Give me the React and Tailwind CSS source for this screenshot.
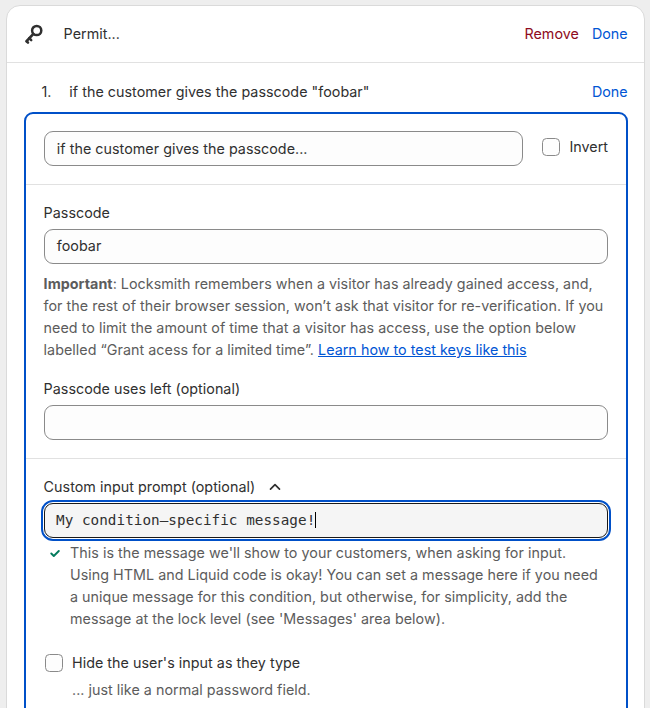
import React from 'react';

function TextField({ value = '', className = '' }) {
  return (
    <div className={`flex h-[35px] items-center rounded-[9px] border border-[#8a8a8a] bg-[#fdfdfd] px-[11.8px] ${className}`}>
      {value}
    </div>
  );
}

function Checkbox() {
  return <span className="block size-[18px] shrink-0 rounded-[4.5px] border border-[#8a8a8a] bg-[#fdfdfd]" />;
}

function KeyIcon() {
  return (
    <svg className="block h-[22px] w-[20px] overflow-visible" viewBox="0 0 20 22" fill="none" stroke="#303030">
      <circle cx="12.7" cy="7.5" r="4.6" strokeWidth="2.5" />
      <path d="M9.4 10.9 2.6 18.2" strokeWidth="2.7" strokeLinecap="round" />
      <path d="M5.3 15.2 7.2 17.1M2.7 18.3 4 19.7" strokeWidth="2.5" strokeLinecap="round" />
    </svg>
  );
}

export default function App() {
  return (
    <div className="h-[708px] w-[650px] overflow-hidden bg-[#eeeeee] pt-[5px] pl-[6px] font-['Inter',sans-serif] text-[14.3px] leading-[22px] tracking-[0.035px] whitespace-nowrap text-[#303030]">
      <div className="h-[760px] w-[639px] rounded-[14px] border border-[#dadada] bg-white">
        <header className="flex h-[57px] items-center border-b border-[#e1e1e1] pr-[16.3px] pl-[17px]">
          <KeyIcon />
          <span className="ml-[19.6px]">Permit...</span>
          <button className="ml-auto text-[#8e0b21]">Remove</button>
          <button className="ml-[13px] text-[#0055d4]">Done</button>
        </header>

        <div className="flex h-[49px] items-end pr-[16.3px] pb-[9px] pl-[34.5px]">
          <span className="w-[27.8px]">1.</span>
          <span>if the customer gives the passcode "foobar"</span>
          <button className="ml-auto text-[#0055d4]">Done</button>
        </div>

        <section className="mr-[16px] ml-[17px] h-[640px] rounded-[9px] border-2 border-[#0050c8]">
          <div className="flex h-[71px] border-b border-[#e1e1e1] pt-[17px] pl-[18px]">
            <TextField className="w-[479px]" value="if the customer gives the passcode..." />
            <label className="mt-[5px] ml-[19px] flex h-[22px] items-center gap-[9.4px]">
              <Checkbox />
              Invert
            </label>
          </div>

          <div className="h-[274px] border-b border-[#e1e1e1] px-[18px] pt-[17px]">
            <div className="-ml-[0.4px]">Passcode</div>
            <TextField className="mt-[5px] pb-px" value="foobar" />
            <p className="mt-[9px] -ml-[0.4px] text-[#5c5c5c]">
              <b className="font-bold">Important</b>: Locksmith remembers when a visitor has already gained access, and,
              <br />
              for the rest of their browser session, won’t ask that visitor for re-verification. If you
              <br />
              need to limit the amount of time that a visitor has access, use the option below
              <br />
              labelled “Grant acess for a limited time”.{' '}
              <a className="text-[#0055d4] underline">Learn how to test keys like this</a>
            </p>
            <div className="mt-[17px] -ml-[0.4px]">Passcode uses left (optional)</div>
            <TextField className="mt-[5px]" />
          </div>

          <div className="px-[18px] pt-[17px]">
            <div className="-ml-[0.4px] flex items-center">
              Custom input prompt (optional)
              <svg className="ml-[14px] h-[8px] w-[12px]" viewBox="0 0 12 8" fill="none" stroke="#303030" strokeWidth="1.7" strokeLinecap="round" strokeLinejoin="round">
                <path d="M1.5 6.2 6 1.7l4.5 4.5" />
              </svg>
            </div>
            <div className="mt-[5px] flex h-[35px] items-center rounded-[9px] border border-[#1a1a1a] bg-[#f5f5f5] px-[11px] pb-[2px] font-['DejaVu_Sans_Mono',monospace] outline-2 outline-offset-1 outline-[#0050c8]">
              My condition–specific message!
              <span className="mt-px h-[16px] w-px bg-black" />
            </div>
            <div className="mt-[4px] flex text-[#5c5c5c]">
              <svg className="mt-[7px] ml-[6px] h-[9px] w-[11px]" viewBox="0 0 11 9" fill="none" stroke="#047b5d" strokeWidth="1.9" strokeLinecap="round" strokeLinejoin="round">
                <path d="M1.3 4.5 3.8 7l5-5" />
              </svg>
              <p className="ml-[9px]">
                This is the message we'll show to your customers, when asking for input.
                <br />
                Using HTML and Liquid code is okay! You can set a message here if you need
                <br />
                a unique message for this condition, but otherwise, for simplicity, add the
                <br />
                message at the lock level (see 'Messages' area below).
              </p>
            </div>
            <label className="mt-[22px] ml-px flex items-center gap-[9px]">
              <Checkbox />
              Hide the user's input as they type
            </label>
            <div className="mt-[5px] ml-[28px] text-[#5c5c5c]">... just like a normal password field.</div>
          </div>
        </section>
      </div>
    </div>
  );
}
